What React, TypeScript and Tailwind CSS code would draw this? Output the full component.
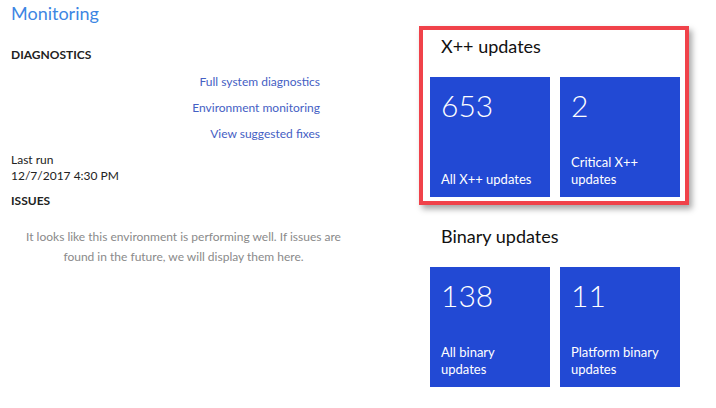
import React from "react";

const font = { fontFamily: 'Lato, "Noto Sans", sans-serif' };

function Tile({ num, label }: { num: string; label: React.ReactNode }) {
  return (
    <div className="w-[120px] h-[120px] shrink-0 bg-[#2249d4] text-white flex flex-col justify-between px-[11px] pt-[10px] pb-[9px]">
      <div className="text-[30px] leading-[36px] font-light">{num}</div>
      <div className="text-[13px] leading-[17px]">{label}</div>
    </div>
  );
}

export default function App() {
  return (
    <div className="w-[716px] h-[408px] bg-white flex" style={font}>
      <div className="w-[330px] shrink-0 pl-[11px] pt-[1px] whitespace-nowrap">
        <div className="text-[18px] leading-[24px] text-[#3d86e3]">Monitoring</div>
        <div className="mt-[22px] text-[12px] leading-[16px] font-bold text-[#222]">DIAGNOSTICS</div>
        <div className="mt-[11px] flex flex-col items-end gap-[10px] text-[12px] leading-[16px] text-[#4560c4] pr-[10px]">
          <span>Full system diagnostics</span>
          <span>Environment monitoring</span>
          <span>View suggested fixes</span>
        </div>
        <div className="mt-[10px] text-[12px] leading-[16px] text-[#222]">
          <div>Last run</div>
          <div>12/7/2017 4:30 PM</div>
        </div>
        <div className="mt-[9px] text-[12px] leading-[16px] font-bold text-[#222]">ISSUES</div>
        <div className="mt-[18px] w-[345px] text-[12px] leading-[20px] text-[#8a8a8a] text-center">
          It looks like this environment is performing well. If issues are
          <br />
          found in the future, we will display them here.
        </div>
      </div>
      <div className="ml-[89px] pt-[26px] flex flex-col">
        <div className="w-[270px] border-[4px] border-[#f0424a] shadow-[3px_4px_6px_rgba(0,0,0,0.35)] pl-[7px] pr-[5px] pt-[4px] pb-[4px]">
          <div className="text-[18px] leading-[24px] text-[#111] pl-[11px]">X++ updates</div>
          <div className="mt-[19px] flex gap-[10px]">
            <Tile num="653" label="All X++ updates" />
            <Tile num="2" label={<>Critical X++<br />updates</>} />
          </div>
        </div>
        <div className="mt-[11px] w-[270px] border-[4px] border-transparent pl-[7px] pr-[5px] pt-[4px]">
          <div className="text-[18px] leading-[24px] text-[#111] pl-[11px]">Binary updates</div>
          <div className="mt-[19px] flex gap-[10px]">
            <Tile num="138" label={<>All binary<br />updates</>} />
            <Tile num="11" label={<>Platform binary<br />updates</>} />
          </div>
        </div>
      </div>
    </div>
  );
}
